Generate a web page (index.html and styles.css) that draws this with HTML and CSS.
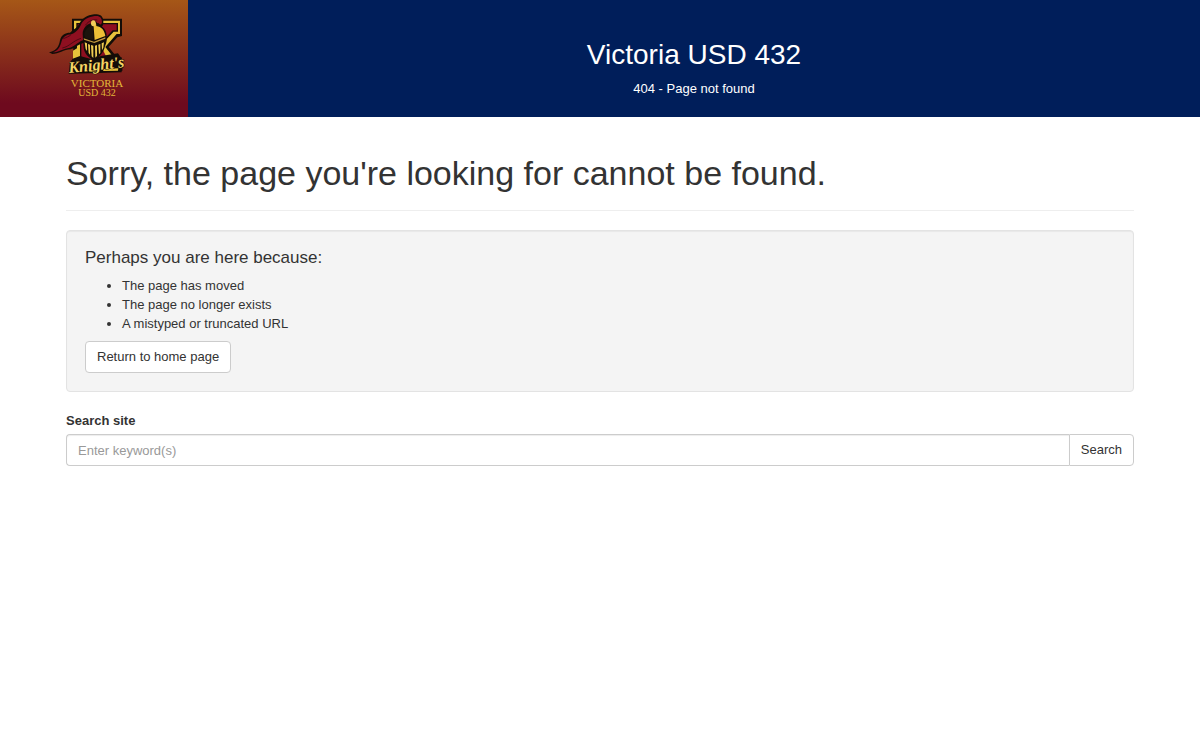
FILE: index.html
```html
<!DOCTYPE html>
<html lang="en">
<head>
<meta charset="utf-8">
<title>Victoria USD 432 - Page not found</title>
<link rel="stylesheet" href="styles.css">
</head>
<body>
<header class="header">
  <div class="brand">
    <svg class="logo" width="188" height="117" viewBox="0 0 188 117" role="img" aria-label="Victoria USD 432 Knights">
      <g transform="scale(.3333)">
        <path fill="#140d08" d="M216 56H366V108L352 112 326 141 351 172H365V217L212 221V184L220 176V145H216Z"/>
        <path fill="#e8c23c" d="M222 62H360V102H350L316 141 345 178H358V200H222V180H231V95H222Z"/>
        <path fill="#140d08" d="M229 69H354V95H341L300 139V180H240V91H229Z"/>
        <path fill="#8e0f20" d="M233 73H350V91H338L300 132 322 176 325 185H244V88H233Z"/>
        <path fill="#e8c23c" d="M219 178V152L231 145V172L243 181 232 190H219Z"/>
        <path fill="#140d08" d="M147 157C165 154 176 144 180 121C184 104 196 98 210 98C221 88 234 82 239 69C249 50 270 43 290 43C304 43 311 54 310 66C311 81 301 86 294 77L264 94 252 128C238 132 226 142 212 148C192 149 176 162 157 162Z"/>
        <path fill="#8e0f20" d="M158 157C177 151 181 138 185 123C189 111 198 104 214 103C230 96 238 86 244 71C254 54 274 48 290 48C300 48 306 55 306 66C305 75 300 75 295 69C279 69 263 80 256 96L249 121C236 124 225 139 210 143C190 145 174 158 158 157Z"/>
        <path fill="none" stroke="#2b080c" stroke-width="2" d="M187 144C210 139 216 124 243 115M213 104C207 110 199 112 190 116M256 76C266 62 279 58 292 60"/>
        <path fill="#140d08" d="M248 103C248 85 259 73 274 70C277 60 290 60 293 73C308 77 319 90 320 106C322 116 320 128 315 139C311 158 298 173 282 180C266 175 252 158 251 144Z"/>
        <path fill="#edbf36" d="M280 68C284 63 289 68 289 78C304 80 314 91 316 108L284 120Z"/>
        <path fill="#1c140d" d="M253 105C254 89 266 80 279 76L280 119 257 114Z"/>
        <ellipse cx="280" cy="70" rx="7" ry="9" fill="#f2cd5b"/>
        <path fill="#c49a3f" d="M251 115 282 125 316 112V116L283 129 252 119Z"/>
        <path fill="#efcb52" d="M254 127 261 130V153L257 147ZM264 132 270 134V164L266 159ZM273 135 280 137V174L275 169ZM285 137 291 135V168L286 173ZM295 134 301 132V159L297 163ZM305 130 312 127 310 143 306 151Z"/>
        <path fill="#140d08" d="M207 221 209 194 218 176 240 168 276 178 303 168 354 160 368 180 367 213 290 218 231 214Z"/>
        <path fill="#e8c23c" d="M267 211 292 209 291 214 268 216ZM309 207 355 205 354 212 310 213Z"/>
      </g>
      <text class="logo-script" x="69" y="73" transform="rotate(-6 69 73)">Knight's</text>
      <text class="logo-name" x="97" y="87">VICTORIA</text>
      <text class="logo-district" x="97" y="96">USD 432</text>
    </svg>
  </div>
  <div class="heading">
    <h1 class="site-title">Victoria USD 432</h1>
    <p class="status">404 - Page not found</p>
  </div>
</header>
<main class="content">
  <h2 class="page-title">Sorry, the page you're looking for cannot be found.</h2>
  <section class="well">
    <h3 class="well-title">Perhaps you are here because:</h3>
    <ul class="reasons">
      <li>The page has moved</li>
      <li>The page no longer exists</li>
      <li>A mistyped or truncated URL</li>
    </ul>
    <a class="button" href="/">Return to home page</a>
  </section>
  <form class="search" role="search">
    <label class="search-label" for="keywords">Search site</label>
    <div class="search-group">
      <input class="search-input" id="keywords" type="text" placeholder="Enter keyword(s)">
      <button class="button search-button" type="submit">Search</button>
    </div>
  </form>
</main>
</body>
</html>
```

FILE: styles.css
```css
* {
  box-sizing: border-box;
}

body {
  margin: 0;
  background: #fff;
  color: #333;
  font: 13px/19px "Liberation Sans", Arial, sans-serif;
}

.header {
  display: flex;
  background: #001e5a;
  color: #fff;
}

.brand {
  flex: none;
  background: linear-gradient(#a65717, #6e0a1e 88%);
}

.logo {
  display: block;
}

.logo-script,
.logo-name,
.logo-district {
  font-family: "Liberation Serif", serif;
  fill: #e3b83a;
}

.logo-script {
  font-size: 16px;
  font-weight: bold;
  font-style: italic;
  fill: #f5d564;
  stroke: #140d08;
  stroke-width: 1px;
  paint-order: stroke;
}

.logo-name {
  font-size: 11px;
  text-anchor: middle;
}

.logo-district {
  font-size: 10px;
  text-anchor: middle;
}

.heading {
  flex: 1;
  padding-top: 39px;
  text-align: center;
}

.site-title {
  margin: 0 0 8px;
  font-size: 28px;
  font-weight: normal;
  line-height: 32px;
}

.status {
  margin: 0;
}

.content {
  padding: 38px 66px;
}

.page-title {
  margin: 0 0 19px;
  padding-bottom: 18px;
  border-bottom: 1px solid #eee;
  font-size: 34px;
  font-weight: normal;
  line-height: 37px;
}

.well {
  margin-bottom: 19px;
  padding: 17px 18px 18px;
  border: 1px solid #e3e3e3;
  border-radius: 4px;
  background: #f4f4f4;
  box-shadow: inset 0 1px 1px rgba(0, 0, 0, .05);
}

.well-title {
  margin: 0 0 9px;
  font-size: 17px;
  font-weight: normal;
  line-height: 19px;
}

.reasons {
  margin: 0 0 8px;
  padding-left: 37px;
}

.button {
  display: inline-block;
  padding: 6px 11px;
  border: 1px solid #ccc;
  border-radius: 4px;
  background: #fff;
  color: #333;
  font: inherit;
  line-height: 18px;
  text-decoration: none;
}

.search-label {
  display: block;
  margin-bottom: 4px;
  font-weight: bold;
}

.search-group {
  display: flex;
}

.search-input {
  flex: 1;
  min-width: 0;
  height: 32px;
  padding: 6px 11px;
  border: 1px solid #ccc;
  border-right: 0;
  border-radius: 4px 0 0 4px;
  background: #fff;
  color: #555;
  font: inherit;
  box-shadow: inset 0 1px 1px rgba(0, 0, 0, .075);
}

.search-input::placeholder {
  color: #999;
}

.search-button {
  border-radius: 0 4px 4px 0;
}
```
